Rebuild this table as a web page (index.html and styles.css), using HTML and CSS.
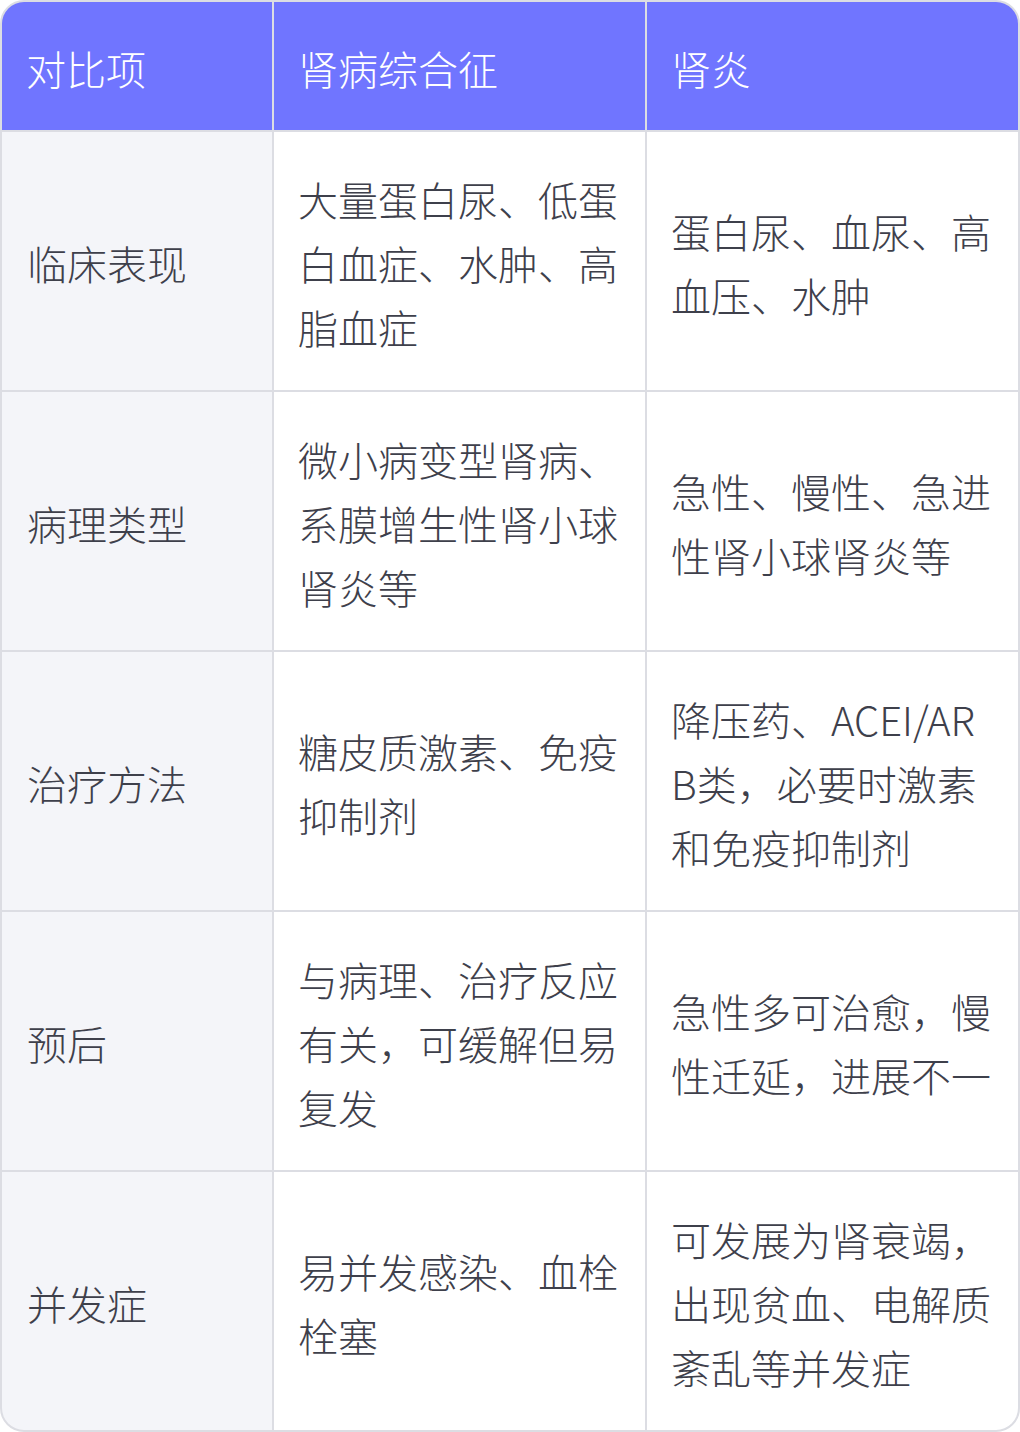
FILE: index.html
```html
<!DOCTYPE html>
<html lang="zh-CN">
<head>
<meta charset="utf-8">
<link rel="stylesheet" href="styles.css">
</head>
<body>
<div class="table">
  <div class="cell head">对比项</div>
  <div class="cell head">肾病综合征</div>
  <div class="cell head">肾炎</div>

  <div class="cell label">临床表现</div>
  <div class="cell">大量蛋白尿、低蛋白血症、水肿、高脂血症</div>
  <div class="cell">蛋白尿、血尿、高血压、水肿</div>

  <div class="cell label">病理类型</div>
  <div class="cell">微小病变型肾病、系膜增生性肾小球肾炎等</div>
  <div class="cell">急性、慢性、急进性肾小球肾炎等</div>

  <div class="cell label">治疗方法</div>
  <div class="cell">糖皮质激素、免疫抑制剂</div>
  <div class="cell">降压药、ACEI/ARB类，必要时激素和免疫抑制剂</div>

  <div class="cell label">预后</div>
  <div class="cell">与病理、治疗反应有关，可缓解但易复发</div>
  <div class="cell">急性多可治愈，慢性迁延，进展不一</div>

  <div class="cell label">并发症</div>
  <div class="cell">易并发感染、血栓栓塞</div>
  <div class="cell">可发展为肾衰竭，出现贫血、电解质紊乱等并发症</div>
</div>
</body>
</html>
```

FILE: styles.css
```css
html, body {
  margin: 0;
  padding: 0;
  background: #ffffff;
}

.table {
  box-sizing: border-box;
  width: 1020px;
  display: grid;
  grid-template-columns: 270px 1fr 1fr;
  gap: 2px;
  background: #dcdde3;
  border: 2px solid #dcdde3;
  border-radius: 24px;
  overflow: hidden;
  font-family: "Noto Sans CJK SC", "Noto Sans", sans-serif;
  font-weight: 300;
  font-size: 40px;
  line-height: 64px;
  color: #3e404b;
}

.cell {
  display: flex;
  align-items: center;
  padding: 35px 24px 31px;
  background: #ffffff;
  word-break: break-all;
  line-break: anywhere;
}

.head {
  padding: 34px 24px 30px;
  background: #7075ff;
  color: #ffffff;
}

.label {
  background: #f4f5f9;
  padding-left: 25px;
}
```
